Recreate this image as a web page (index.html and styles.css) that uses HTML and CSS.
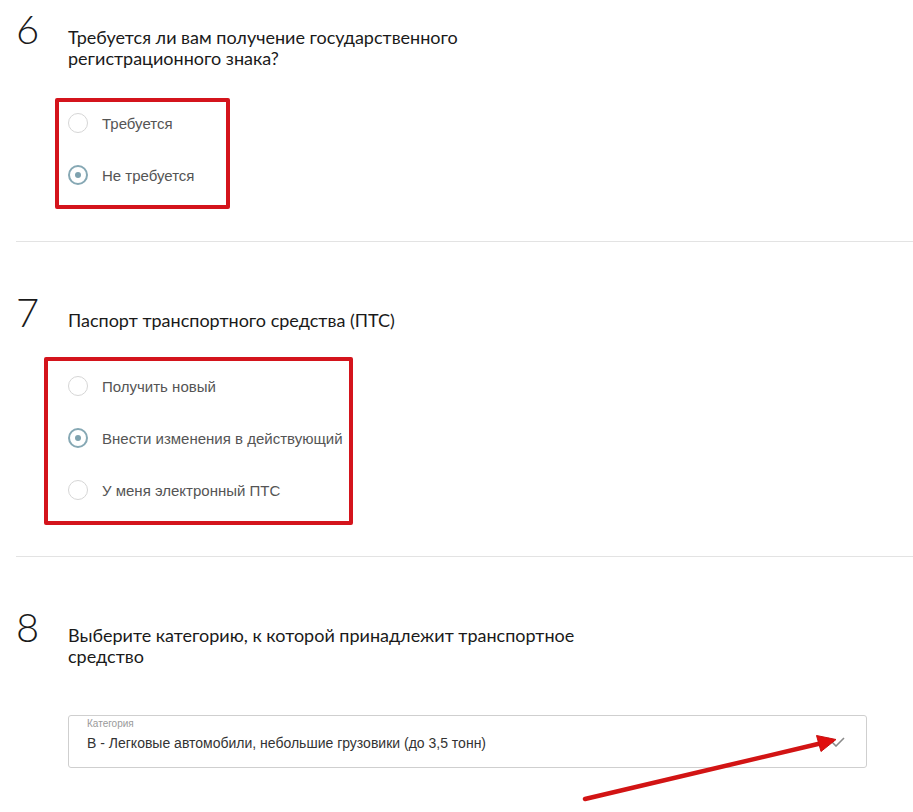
FILE: index.html
```html
<!DOCTYPE html>
<html lang="ru">
<head>
<meta charset="utf-8">
<title>Вопросы</title>
<link rel="stylesheet" href="styles.css">
</head>
<body>
<main class="form">
  <section class="question question--first">
    <div class="question-head">
      <span class="question-num">6</span>
      <h2 class="question-title">Требуется ли вам получение государственного регистрационного знака?</h2>
    </div>
    <div class="radio-group">
      <label class="radio"><span class="radio-mark"></span><span class="radio-text">Требуется</span></label>
      <label class="radio"><span class="radio-mark radio-mark--checked"></span><span class="radio-text">Не требуется</span></label>
      <span class="highlight highlight--q6"></span>
    </div>
  </section>

  <section class="question">
    <div class="question-head">
      <span class="question-num">7</span>
      <h2 class="question-title">Паспорт транспортного средства (ПТС)</h2>
    </div>
    <div class="radio-group">
      <label class="radio"><span class="radio-mark"></span><span class="radio-text">Получить новый</span></label>
      <label class="radio"><span class="radio-mark radio-mark--checked"></span><span class="radio-text">Внести изменения в действующий</span></label>
      <label class="radio"><span class="radio-mark"></span><span class="radio-text">У меня электронный ПТС</span></label>
      <span class="highlight highlight--q7"></span>
    </div>
  </section>

  <section class="question question--last">
    <div class="question-head">
      <span class="question-num">8</span>
      <h2 class="question-title">Выберите категорию, к которой принадлежит транспортное средство</h2>
    </div>
    <div class="select-wrap">
      <div class="select">
        <div class="select-body">
          <span class="select-label">Категория</span>
          <span class="select-value">В - Легковые автомобили, небольшие грузовики (до 3,5 тонн)</span>
        </div>
        <svg class="select-chevron" width="18" height="10" viewBox="0 0 18 10"><path d="M1 1 L9 9 L17 1" fill="none" stroke="#8a8a8a" stroke-width="1.6"/></svg>
      </div>
      <svg class="arrow" width="270" height="85" viewBox="0 0 270 85">
        <line x1="5" y1="74" x2="240" y2="18.5" stroke="#d21414" stroke-width="4.5" stroke-linecap="round"/>
        <polygon points="256,14.5 241,26.5 236.5,10.5" fill="#e00e0e" stroke="#c81010" stroke-width="1"/>
      </svg>
    </div>
  </section>
</main>
</body>
</html>
```

FILE: styles.css
```css
html, body {
  margin: 0;
  padding: 0;
  background: #ffffff;
}

.form {
  width: 913px;
}

.question {
  margin-left: 16px;
  padding: 50px 0 40px 0;
  border-bottom: 1px solid #e3e3e3;
}

.question--first {
  padding-top: 9px;
}

.question--last {
  border-bottom: none;
}

.question-head {
  display: flex;
  align-items: baseline;
}

.question-num {
  flex: 0 0 52px;
  font-family: "Lato", "Noto Sans", sans-serif;
  font-weight: 300;
  font-size: 40px;
  line-height: 40px;
  color: #1a1a1a;
}

.question-title {
  margin: 0;
  max-width: 530px;
  font-family: "Lato", "Noto Sans", sans-serif;
  font-weight: 400;
  font-size: 18px;
  line-height: 21px;
  color: #1a1a1a;
}

.radio-group {
  position: relative;
  margin: 28px 0 0 52px;
  display: flex;
  flex-direction: column;
  align-items: flex-start;
}

.radio {
  display: flex;
  align-items: center;
  height: 52px;
  gap: 14px;
  cursor: pointer;
}

.radio-mark {
  box-sizing: border-box;
  width: 20px;
  height: 20px;
  border-radius: 50%;
  border: 1px solid #d6d6d6;
  background: #fff;
  display: flex;
  align-items: center;
  justify-content: center;
}

.radio-mark--checked {
  border: 2px solid #86a8b4;
}

.radio-mark--checked::after {
  content: "";
  width: 6px;
  height: 6px;
  border-radius: 50%;
  background: #7fa2af;
}

.radio-text {
  font-family: "Liberation Sans", Arial, sans-serif;
  font-size: 15px;
  color: #555555;
}

.highlight {
  position: absolute;
  box-sizing: border-box;
  border: 4px solid #d4141c;
  border-radius: 2px;
  pointer-events: none;
}

.highlight--q6 {
  left: -13px;
  top: 1px;
  width: 175px;
  height: 111px;
}

.highlight--q7 {
  left: -24px;
  top: -3px;
  width: 309px;
  height: 168px;
}

.select-wrap {
  position: relative;
  margin: 48px 46px 0 52px;
}

.select {
  box-sizing: border-box;
  height: 53px;
  border: 1px solid #cfcfcf;
  border-radius: 3px;
  display: flex;
  align-items: center;
  padding: 0 21px 0 18px;
}

.select-body {
  flex: 1;
  display: flex;
  flex-direction: column;
  align-self: stretch;
  padding-top: 2px;
}

.select-label {
  font-family: "Liberation Sans", Arial, sans-serif;
  font-size: 10px;
  line-height: 12px;
  color: #9a9a9a;
}

.select-value {
  margin-top: 3px;
  font-family: "Liberation Sans", Arial, sans-serif;
  font-size: 14px;
  line-height: 20px;
  color: #333333;
}

.select-chevron {
  display: block;
}

.arrow {
  position: absolute;
  left: 512px;
  top: 10px;
  overflow: visible;
}
```
